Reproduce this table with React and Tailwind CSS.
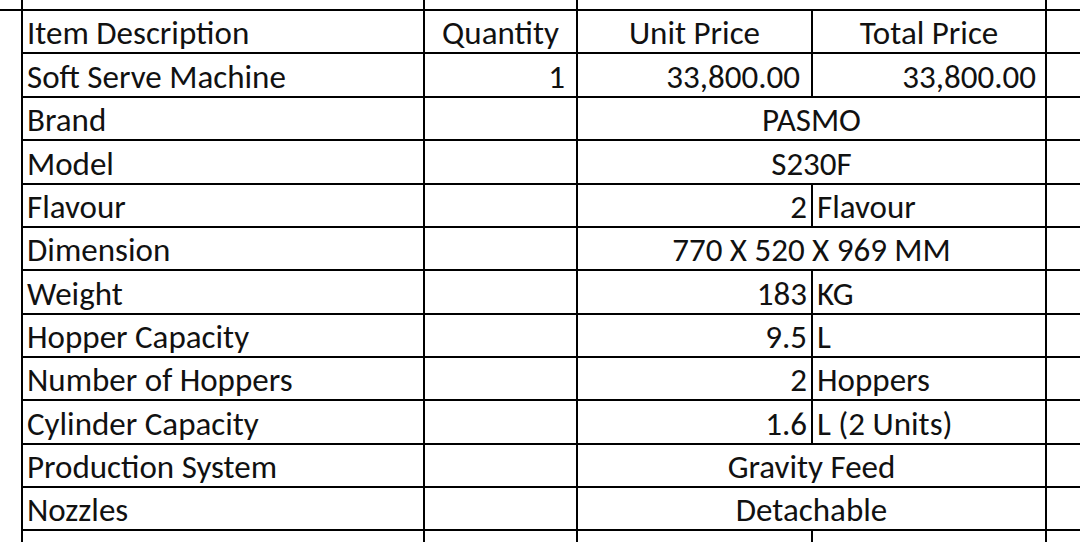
const cols = "grid grid-cols-[21px_402px_153px_235px_234px_1fr]";
const font = { fontFamily: '"Carlito", "Liberation Sans Narrow", "Open Sans", sans-serif' };

const rows = [
  { label: "Brand", value: "PASMO" },
  { label: "Model", value: "S230F" },
  { label: "Flavour", num: "2", unit: "Flavour" },
  { label: "Dimension", value: "770 X 520 X 969 MM" },
  { label: "Weight", num: "183", unit: "KG" },
  { label: "Hopper Capacity", num: "9.5", unit: "L" },
  { label: "Number of Hoppers", num: "2", unit: "Hoppers" },
  { label: "Cylinder Capacity", num: "1.6", unit: "L (2 Units)" },
  { label: "Production System", value: "Gravity Feed" },
  { label: "Nozzles", value: "Detachable" },
];

function Cell({ children, className = "" }) {
  return (
    <div className={"flex items-center border-l-2 border-b-2 border-black pt-[4px] whitespace-nowrap " + className}>
      {children}
    </div>
  );
}

export default function App() {
  return (
    <div className="w-[1080px] h-[542px] overflow-hidden bg-white text-[#111] text-[33px] leading-none" style={font}>
      {/* strip above the header */}
      <div className={cols + " h-[11px]"}>
        <div className="border-b-2 border-black" />
        <div className="border-l-2 border-b-2 border-black" />
        <div className="border-l-2 border-b-2 border-black" />
        <div className="col-span-2 border-l-2 border-b-2 border-black" />
        <div className="border-l-2 border-b-2 border-black" />
      </div>

      <div className={cols + " h-[43px]"}>
        <div />
        <Cell className="pl-[4px]">Item Description</Cell>
        <Cell className="justify-center">Quantity</Cell>
        <Cell className="justify-center">Unit Price</Cell>
        <Cell className="justify-center">Total Price</Cell>
        <Cell />
      </div>

      <div className={cols + " h-[44px]"}>
        <div />
        <Cell className="pl-[4px]">Soft Serve Machine</Cell>
        <Cell className="justify-end pr-[11px]">1</Cell>
        <Cell className="justify-end pr-[11px]">33,800.00</Cell>
        <Cell className="justify-end pr-[9px]">33,800.00</Cell>
        <Cell />
      </div>

      {rows.map((r, i) => (
        <div key={r.label} className={cols + (i % 3 === 1 ? " h-[44px]" : " h-[43px]")}>
          <div />
          <Cell className="pl-[4px]">{r.label}</Cell>
          <Cell />
          {r.value ? (
            <Cell className="col-span-2 justify-center">{r.value}</Cell>
          ) : (
            <>
              <Cell className="justify-end pr-[4px]">{r.num}</Cell>
              <Cell className="pl-[4px]">{r.unit}</Cell>
            </>
          )}
          <Cell />
        </div>
      ))}

      {/* strip below the last row */}
      <div className={cols + " h-[20px]"}>
        <div />
        <div className="border-l-2 border-black" />
        <div className="border-l-2 border-black" />
        <div className="border-l-2 border-black" />
        <div className="border-l-2 border-black" />
        <div className="border-l-2 border-black" />
      </div>
    </div>
  );
}
